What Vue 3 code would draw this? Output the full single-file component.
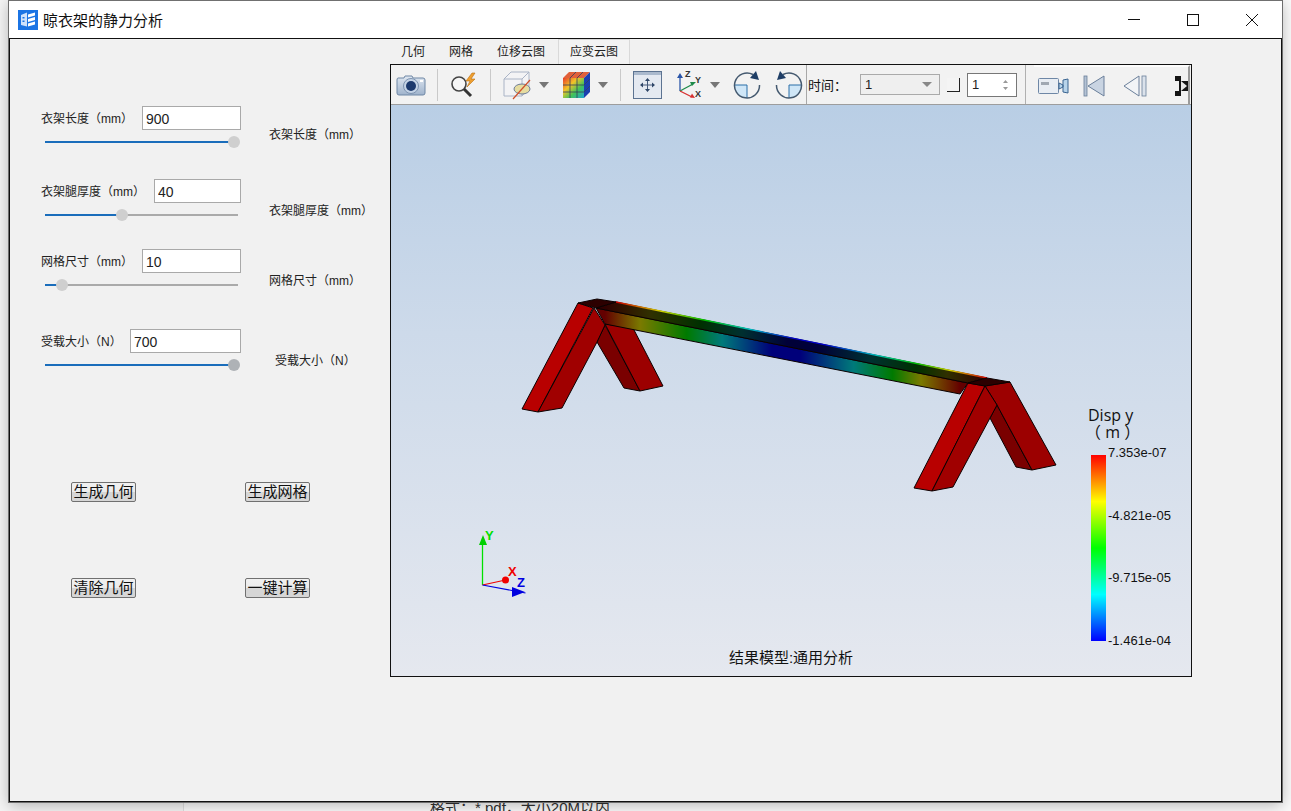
<template>
  <div class="desktop">
    <div class="backdrop-note">格式：*.pdf，大小20M以内</div>
    <div class="window">
      <div class="titlebar">
        <svg class="logo" width="20" height="20" viewBox="0 0 20 20">
          <rect width="20" height="20" fill="#1b74e4" />
          <path d="M3 5l6-2.500v14L3 15z" fill="#cfe2fb" />
          <path d="M10 4.500l7-2v3l-7 2zM10 9l7-2v3l-7 2zM10 13.500l7-2v3l-7 2z" fill="#fff" />
          <path d="M4.500 7h2v1.500h-2zM4.500 10.500h2V12h-2z" fill="#1b74e4" />
        </svg>
        <span class="title">晾衣架的静力分析</span>
        <div class="win-btns">
          <svg width="12" height="12" viewBox="0 0 12 12"><path d="M0 5.500h12" stroke="#111" /></svg>
          <svg width="12" height="12" viewBox="0 0 12 12"><rect x=".5" y=".5" width="11" height="11" fill="none" stroke="#111" /></svg>
          <svg width="12" height="12" viewBox="0 0 12 12"><path d="M0 0l12 12M12 0L0 12" stroke="#111" /></svg>
        </div>
      </div>

      <div class="frame">
        <aside class="panel">
          <div v-for="p in params" :key="p.label" class="param" :style="{ marginTop: p.top + 'px' }">
            <div class="param-main">
              <div class="param-head">
                <span class="lbl">{{ p.label }}</span>
                <input class="num" :value="p.value" :style="{ width: p.width + 'px' }" />
              </div>
              <div class="slider">
                <div class="fill" :style="{ width: p.pct + '%' }"></div>
                <div class="thumb" :class="{ dark: p.dark }" :style="{ left: p.pct + '%' }"></div>
              </div>
            </div>
            <span class="lbl side" :style="{ marginTop: p.sideTop + 'px', marginLeft: p.sideLeft + 'px' }">{{ p.label }}</span>
          </div>

          <div class="actions">
            <button v-for="b in buttons" :key="b" class="act">{{ b }}</button>
          </div>
        </aside>

        <section class="viewer">
          <div class="tabs">
            <span v-for="t in tabs" :key="t" class="tab" :class="{ on: t === '应变云图' }">{{ t }}</span>
          </div>
          <div class="view-box">
            <div class="toolbar">
              <svg class="i-cam" width="30" height="24" viewBox="0 0 30 24">
                <defs>
                  <linearGradient id="camBody" x1="0" y1="0" x2="0" y2="1">
                    <stop offset="0" stop-color="#dfe7f1" /><stop offset="1" stop-color="#9fb3cc" />
                  </linearGradient>
                </defs>
                <path d="M2 5h6l1-2h7l1 2h10q2 0 2 2v13q0 2-2 2H3q-2 0-2-2V7q0-2 1-2z" fill="url(#camBody)" stroke="#6f87a5" />
                <circle cx="15" cy="13" r="7.500" fill="#c4d3e6" stroke="#7d93b0" />
                <circle cx="15" cy="13" r="5" fill="#1c3a6e" />
                <rect x="24" y="7" width="3" height="2" fill="#fff" />
              </svg>
              <i class="sep s1"></i>
              <svg class="i-zoom" width="30" height="26" viewBox="0 0 30 26">
                <circle cx="9" cy="12" r="7" fill="#f6f6f6" stroke="#444" stroke-width="1.600" />
                <path d="M14 17l7 7" stroke="#333" stroke-width="3" />
                <path d="M22 1l-6 8h4l-3 6 8-8h-4l4-6z" fill="#f0a030" stroke="#b86f10" stroke-width=".6" />
              </svg>
              <i class="sep s2"></i>
              <svg class="i-box" width="30" height="30" viewBox="0 0 30 30">
                <path d="M2 9l7-7h18v16l-7 8H2z" fill="#f3f3f5" stroke="#aab4c6" />
                <path d="M2 9h18v17M20 9l7-7" fill="none" stroke="#aab4c6" />
                <ellipse cx="20" cy="19" rx="8" ry="5" fill="#e6dca0" stroke="#6d7c96" />
                <path d="M11 29l17-19" stroke="#d0502a" stroke-width="1.200" />
              </svg>
              <svg class="i-arrow a1" width="10" height="6" viewBox="0 0 10 6"><path d="M0 0h10L5 6z" fill="#777" /></svg>
              <svg class="i-cube" width="29" height="28" viewBox="0 0 29 28">
                <defs>
                  <linearGradient id="cubeFace" x1="0" y1="0" x2="1" y2="1">
                    <stop offset="0" stop-color="#e8392a" /><stop offset=".35" stop-color="#f2c428" />
                    <stop offset=".65" stop-color="#42c25a" /><stop offset="1" stop-color="#1fa4d2" />
                  </linearGradient>
                </defs>
                <path d="M1 7l6-6h21L22 7z" fill="#e0603a" />
                <rect x="1" y="7" width="21" height="20" fill="url(#cubeFace)" />
                <path d="M22 7l6-6v20l-6 6z" fill="#1a3fb0" />
                <path d="M8 7v20M15 7v20M1 14h21M1 21h21M22 14l6-6M22 21l6-6M8 7l6-6M15 7l6-6" stroke="#33405c" stroke-width=".8" />
              </svg>
              <svg class="i-arrow a2" width="10" height="6" viewBox="0 0 10 6"><path d="M0 0h10L5 6z" fill="#777" /></svg>
              <i class="sep s3"></i>
              <svg class="i-fit" width="29" height="28" viewBox="0 0 29 28">
                <rect x=".5" y=".5" width="28" height="27" fill="#e4e9f1" stroke="#5c7391" />
                <rect x="1" y="1" width="27" height="3" fill="#aab9cd" />
                <path d="M14.500 8v12M8.500 14h12" stroke="#44597a" />
                <path d="M14.500 7l-2.500 3h5zM14.500 21l-2.500-3h5zM7 14l3-2.500v5zM22 14l-3-2.500v5z" fill="#2f4668" />
              </svg>
              <svg class="i-triad" width="30" height="30" viewBox="0 0 30 30">
                <path d="M6 21V7" stroke="#2a55a8" stroke-width="1.300" />
                <path d="M6 3l-3 5h6z" fill="#2a55a8" />
                <path d="M6 21l13-7" stroke="#1e8a4a" stroke-width="1.300" />
                <path d="M22 12l-6 0 2 4z" fill="#1e8a4a" />
                <path d="M6 21l12 6" stroke="#d83030" stroke-width="1.300" />
                <path d="M21 28l-5-.5 2-4z" fill="#d83030" />
                <text x="11" y="7" class="axis">Z</text>
                <text x="21" y="13" class="axis">Y</text>
                <text x="21" y="27" class="axis">X</text>
              </svg>
              <svg class="i-arrow a3" width="10" height="6" viewBox="0 0 10 6"><path d="M0 0h10L5 6z" fill="#777" /></svg>
              <svg class="i-rot r1" width="28" height="28" viewBox="0 0 28 28">
                <path d="M14 14V27A12.500 12.500 0 0 1 1.500 14z" fill="#cfe6f7" />
                <path d="M14 14v13M1.500 14H14" stroke="#2a6ea8" />
                <path d="M20 3.500A12.500 12.500 0 1 0 26.500 14" fill="none" stroke="#44596f" stroke-width="1.500" />
                <path d="M23 0l3 9-9-2z" fill="#1f3e66" />
              </svg>
              <svg class="i-rot r2" width="28" height="28" viewBox="0 0 28 28">
                <path d="M14 14V27A12.500 12.500 0 0 0 26.500 14z" fill="#cfe6f7" />
                <path d="M14 14v13M26.500 14H14" stroke="#2a6ea8" />
                <path d="M8 3.500A12.500 12.500 0 1 1 1.500 14" fill="none" stroke="#44596f" stroke-width="1.500" />
                <path d="M5 0l-3 9 9-2z" fill="#1f3e66" />
              </svg>
              <i class="sep s4"></i>
              <span class="time-lbl">时间：</span>
              <div class="combo"><span>1</span><b></b></div>
              <i class="check"></i>
              <div class="spin">
                <span>1</span>
                <svg width="7" height="12" viewBox="0 0 7 12"><path d="M3.500 1L6 4H1zM3.500 11L1 8h5z" fill="#999" /></svg>
              </div>
              <i class="sep s5"></i>
              <div class="player">
                <svg class="i-rec" width="31" height="18" viewBox="0 0 31 18">
                  <rect x=".5" y="1.500" width="20" height="15" rx="1" fill="#e8edf3" stroke="#6e87a6" />
                  <rect x="3" y="5" width="8" height="3" fill="#a0a8b2" />
                  <path d="M21 6l4 2v2l-4 2zM25 3l5-1v14l-5-1z" fill="#b8d4ea" stroke="#3a6490" />
                </svg>
                <svg class="i-first" width="22" height="22" viewBox="0 0 22 22">
                  <rect x="1" y="1" width="3" height="20" fill="#b4c2d4" stroke="#6a7f9a" stroke-width=".8" />
                  <path d="M21 1v20L5 11z" fill="#c9d4e2" stroke="#6a7f9a" />
                </svg>
                <svg class="i-prev" width="24" height="22" viewBox="0 0 24 22">
                  <path d="M16 1v20L1 11z" fill="#f2f4f7" stroke="#6a7f9a" />
                  <rect x="19" y="1" width="4" height="20" fill="#dbe2eb" stroke="#6a7f9a" stroke-width=".8" />
                </svg>
                <svg class="i-next" width="13" height="20" viewBox="0 0 13 20">
                  <path d="M0 0h6v5h7v10H6v5H0v-5h4V5H0z" fill="#151515" />
                  <path d="M6 5l6 5-6 5z" fill="#e8e8e8" />
                </svg>
              </div>
            </div>

            <div class="scene">
              <svg class="model" width="800" height="571" viewBox="391 105 800 571">
                <defs>
                  <linearGradient id="beamFront" gradientUnits="userSpaceOnUse" x1="605" y1="0" x2="960" y2="0">
                    <stop offset="0" stop-color="#640000" />
                    <stop offset=".1" stop-color="#7a7a00" />
                    <stop offset=".23" stop-color="#007a00" />
                    <stop offset=".33" stop-color="#007a7a" />
                    <stop offset=".47" stop-color="#00007a" />
                    <stop offset=".55" stop-color="#00007a" />
                    <stop offset=".7" stop-color="#007a7a" />
                    <stop offset=".81" stop-color="#007a00" />
                    <stop offset=".89" stop-color="#7a7a00" />
                    <stop offset="1" stop-color="#640000" />
                  </linearGradient>
                  <linearGradient id="beamTop" gradientUnits="userSpaceOnUse" x1="605" y1="0" x2="985" y2="0">
                    <stop offset="0" stop-color="#300000" />
                    <stop offset=".12" stop-color="#303000" />
                    <stop offset=".25" stop-color="#003000" />
                    <stop offset=".36" stop-color="#003030" />
                    <stop offset=".48" stop-color="#000038" />
                    <stop offset=".56" stop-color="#000038" />
                    <stop offset=".7" stop-color="#003030" />
                    <stop offset=".82" stop-color="#003000" />
                    <stop offset=".9" stop-color="#303000" />
                    <stop offset="1" stop-color="#300000" />
                  </linearGradient>
                  <linearGradient id="beamEdge" gradientUnits="userSpaceOnUse" x1="616" y1="0" x2="987" y2="0">
                    <stop offset="0" stop-color="#d00000" />
                    <stop offset=".12" stop-color="#d0d000" />
                    <stop offset=".24" stop-color="#00c000" />
                    <stop offset=".36" stop-color="#00c0c0" />
                    <stop offset=".48" stop-color="#0000d0" />
                    <stop offset=".56" stop-color="#0000d0" />
                    <stop offset=".7" stop-color="#00c0c0" />
                    <stop offset=".81" stop-color="#00c000" />
                    <stop offset=".9" stop-color="#d0d000" />
                    <stop offset="1" stop-color="#d00000" />
                  </linearGradient>
                </defs>

                <g stroke="#0b0000" stroke-width="1" stroke-linejoin="round">
                  <!-- left support -->
                  <polygon points="597,342 605,325 640,391 624,388" fill="#7a0000" />
                  <polygon points="605,324 633,328 663,386 640,391" fill="#9c0000" />
                  <!-- beam -->
                  <polygon points="596,308 968,383 960,394 605,324" fill="url(#beamFront)" />
                  <polygon points="616,302 987,378 968,383 596,308" fill="url(#beamTop)" />
                  <path d="M616 302L987 378" stroke="url(#beamEdge)" stroke-width="1.400" fill="none" />
                  <polygon points="578,303 593,308 538,412 522,409" fill="#b80000" />
                  <polygon points="594,308 605,325 597,342 562,408 538,412" fill="#a00000" />
                  <polygon points="578,303 597,299 616,302 596,308" fill="#2c0000" />
                  <!-- right support -->
                  <polygon points="990,418 997,405 1032,470 1016,467" fill="#7a0000" />
                  <polygon points="985,386 1010,382 1056,465 1032,470 997,405" fill="#9c0000" />
                  <polygon points="968,383 985,386 932,491 914,488" fill="#b80000" />
                  <polygon points="985,386 997,405 990,418 953,487 932,491" fill="#a00000" />
                  <polygon points="968,383 987,378 1010,382 985,386" fill="#2c0000" />
                </g>

                <!-- triad -->
                <path d="M482.500 585V540" stroke="#00e000" stroke-width="1.300" />
                <path d="M483 535l-4 10h8z" fill="#00d000" />
                <path d="M482.500 585l23-5" stroke="#f00000" stroke-width="1.200" />
                <circle cx="505.500" cy="580" r="3.500" fill="#f00000" />
                <path d="M482.500 585l43 8" stroke="#0000e0" stroke-width="1.200" />
                <path d="M512 587l13 5-13 5z" fill="#0000e0" />
                <text x="485" y="540" class="tr green">Y</text>
                <text x="508" y="576" class="tr red">X</text>
                <text x="517" y="587" class="tr blue">Z</text>
              </svg>

              <div class="legend">
                <div class="legend-title">Disp y<br /><span>（ m ）</span></div>
                <div class="legend-body">
                  <div class="color-bar"></div>
                  <div class="ticks">
                    <span v-for="t in ticks" :key="t">{{ t }}</span>
                  </div>
                </div>
              </div>
              <div class="model-name">结果模型:通用分析</div>
            </div>
          </div>
        </section>
      </div>
    </div>
  </div>
</template>

<script setup>
const params = [
  { label: '衣架长度（mm）', value: '900', width: 99, pct: 98, top: 67, sideTop: 21, sideLeft: 28 },
  { label: '衣架腿厚度（mm）', value: '40', width: 87, pct: 40, top: 36, sideTop: 24, sideLeft: 28 },
  { label: '网格尺寸（mm）', value: '10', width: 99, pct: 9, top: 30, sideTop: 24, sideLeft: 28 },
  { label: '受载大小（N）', value: '700', width: 111, pct: 98, top: 40, sideTop: 24, sideLeft: 34, dark: true },
]
const buttons = ['生成几何', '生成网格', '清除几何', '一键计算']
const tabs = ['几何', '网格', '位移云图', '应变云图']
const ticks = ['7.353e-07', '-4.821e-05', '-9.715e-05', '-1.461e-04']
</script>

<style>
html, body { margin: 0; height: 100%; overflow: hidden; background: #f7f7f7; }
</style>

<style scoped>
.desktop {
  position: relative;
  width: 1291px;
  height: 811px;
  overflow: hidden;
  background: linear-gradient(90deg, #f4f4f4 0, #f4f4f4 183px, #dedede 183px, #dedede 184px, #fafafa 184px);
  font-family: "Liberation Sans", "Noto Sans CJK SC", sans-serif;
  color: #222;
}
.backdrop-note {
  position: absolute;
  left: 430px;
  top: 796px;
  font-size: 15px;
  color: #333;
}
.window {
  position: absolute;
  left: 9px;
  top: 0;
  width: 1273px;
  height: 802px;
  box-sizing: border-box;
  display: flex;
  flex-direction: column;
  background: #fff;
  border-top: 1px solid #707070;
  box-shadow: 0 0 0 1px #6e6e6e, 0 3px 14px rgba(0, 0, 0, 0.28);
}
.titlebar {
  height: 37px;
  flex: none;
  display: flex;
  align-items: center;
  padding-left: 9px;
  background: #fff;
}
.logo { flex: none; }
.title { margin-left: 5px; font-size: 15px; color: #111; }
.win-btns {
  margin-left: auto;
  margin-right: 24px;
  display: flex;
  gap: 47px;
  margin-top: 1px;
}
.frame {
  flex: 1;
  display: flex;
  min-height: 0;
  background: #f1f1f1;
  border: 1px solid #111;
}
.panel {
  width: 380px;
  flex: none;
  box-sizing: border-box;
  padding-left: 31px;
}
.param { display: flex; align-items: flex-start; }
.param-main { width: 200px; flex: none; }
.param-head {
  height: 24px;
  display: flex;
  align-items: center;
  justify-content: space-between;
}
.lbl { font-size: 12px; line-height: 16px; color: #222; white-space: nowrap; }
.param-head .lbl { padding-top: 2px; }
.num {
  box-sizing: border-box;
  height: 24px;
  padding: 1px 3px 0;
  border: 1px solid #a9a9a9;
  background: #fff;
  font: 14px "Liberation Sans", sans-serif;
  color: #222;
  outline: none;
}
.slider {
  position: relative;
  width: 193px;
  height: 2px;
  margin: 11px 0 0 4px;
  background: #aaa;
}
.fill { height: 2px; background: #1a6dbb; }
.thumb {
  position: absolute;
  top: -5px;
  width: 12px;
  height: 12px;
  margin-left: -6px;
  border-radius: 50%;
  background: #cfcfcf;
}
.thumb.dark { background: #aeb2b6; }
.actions {
  display: grid;
  grid-template-columns: 65px 65px;
  column-gap: 109px;
  row-gap: 76px;
  margin: 113px 0 0 30px;
}
.act {
  box-sizing: border-box;
  height: 20px;
  padding: 0 0 1px;
  border: 1px solid #707070;
  border-radius: 2px;
  background: linear-gradient(#f0f0f0 0, #ececec 50%, #d6d6d6 51%, #d6d6d6 100%);
  font: 15px/16px "Liberation Sans", "Noto Sans CJK SC", sans-serif;
  color: #111;
  white-space: nowrap;
}
.viewer { flex: none; width: 802px; display: flex; flex-direction: column; }
.tabs {
  height: 25px;
  flex: none;
  display: flex;
  align-items: flex-end;
  font-size: 12px;
}
.tab {
  height: 25px;
  line-height: 27px;
  padding: 0 12px;
  color: #222;
  white-space: nowrap;
}
.tab:first-child { margin-left: -1px; }
.tab.on {
  height: 24px;
  line-height: 25px;
  margin-left: 1px;
  padding: 0 11px;
  background: #f3f3f3;
  border: 1px solid #d9d9d9;
  border-bottom: 0;
}
.view-box {
  flex: none;
  height: 613px;
  box-sizing: border-box;
  border: 1px solid #111;
  display: flex;
  flex-direction: column;
}
.toolbar {
  flex: none;
  height: 40px;
  box-sizing: border-box;
  display: flex;
  align-items: center;
  overflow: hidden;
  background: #f2f2f2;
  border-bottom: 1px solid #9d9d9d;
}
.toolbar svg { flex: none; }
.sep { flex: none; width: 1px; height: 32px; background: #c9c9c9; }
.i-cam { margin-left: 5px; }
.s1 { margin-left: 11px; }
.i-zoom { margin-left: 12px; }
.s2 { margin-left: 10px; }
.i-box { margin-left: 11px; }
.a1 { margin-left: 7px; }
.i-cube { margin-left: 13px; }
.a2 { margin-left: 7px; }
.s3 { margin-left: 12px; }
.i-fit { margin-left: 12px; }
.i-triad { margin-left: 12px; }
.a3 { margin-left: 6px; }
.r1 { margin-left: 13px; }
.r2 { margin-left: 14px; }
.s4 { margin-left: 3px; height: 39px; background: #a8a8a8; }
.time-lbl { margin-left: 1px; font-size: 13px; width: 52px; color: #111; white-space: nowrap; }
.combo {
  box-sizing: border-box;
  flex: none;
  width: 80px;
  height: 21px;
  display: flex;
  align-items: center;
  justify-content: space-between;
  padding: 0 7px 0 4px;
  border: 1px solid #aaa;
  background: #efefef;
  font-size: 13px;
}
.combo b {
  width: 0;
  height: 0;
  border: 5px solid transparent;
  border-top: 5px solid #888;
  border-bottom: 0;
}
.check {
  flex: none;
  width: 12px;
  height: 13px;
  margin-left: 7px;
  border-right: 1px solid #222;
  border-bottom: 1px solid #222;
  background: #f4f4f4;
}
.spin {
  box-sizing: border-box;
  flex: none;
  width: 50px;
  height: 24px;
  margin-left: 7px;
  display: flex;
  align-items: center;
  justify-content: space-between;
  padding: 0 7px 0 4px;
  border: 1px solid #777;
  background: #fff;
  font-size: 13px;
}
.s5 { margin-left: 8px; height: 39px; background: #b0b0b0; }
.player {
  flex: none;
  width: 156px;
  height: 39px;
  margin-left: 8px;
  display: flex;
  align-items: center;
  overflow: hidden;
  border-top: 2px solid #fdfdfd;
  border-right: 2px solid #9a9a9a;
  box-sizing: border-box;
}
.i-rec { margin-left: 4px; }
.i-first { margin-left: 14px; }
.i-prev { margin-left: 18px; }
.i-next { margin-left: 28px; }
.axis { font: bold 9px "Liberation Sans", sans-serif; fill: #333; }

.scene {
  position: relative;
  flex: 1;
  background: linear-gradient(#b9cee5 0, #cddaea 40%, #e5e8ef 100%);
  overflow: hidden;
}
.model { position: absolute; left: 0; top: 0; }
.tr { font: bold 13px "Liberation Sans", sans-serif; }
.green { fill: #00e000; }
.red { fill: #f00000; }
.blue { fill: #0000e0; }
.legend { position: absolute; left: 697px; top: 302px; }
.legend-title { font: 16px/17px "Open Sans", "Noto Sans CJK SC", sans-serif; color: #111; white-space: nowrap; }
.legend-title span { margin-left: -3px; }
.legend-body { display: flex; margin: 14px 0 0 3px; }
.color-bar {
  width: 15px;
  height: 186px;
  background: linear-gradient(#f00 0, #ff0 25%, #0f0 50%, #0ff 75%, #00f 100%);
}
.ticks {
  height: 202px;
  margin: -9px 0 0 2px;
  display: flex;
  flex-direction: column;
  justify-content: space-between;
  font: 13px/14px "Liberation Sans", sans-serif;
  color: #111;
}
.model-name {
  position: absolute;
  left: 0;
  right: 0;
  bottom: 9px;
  text-align: center;
  font-size: 15px;
  color: #111;
}
</style>
